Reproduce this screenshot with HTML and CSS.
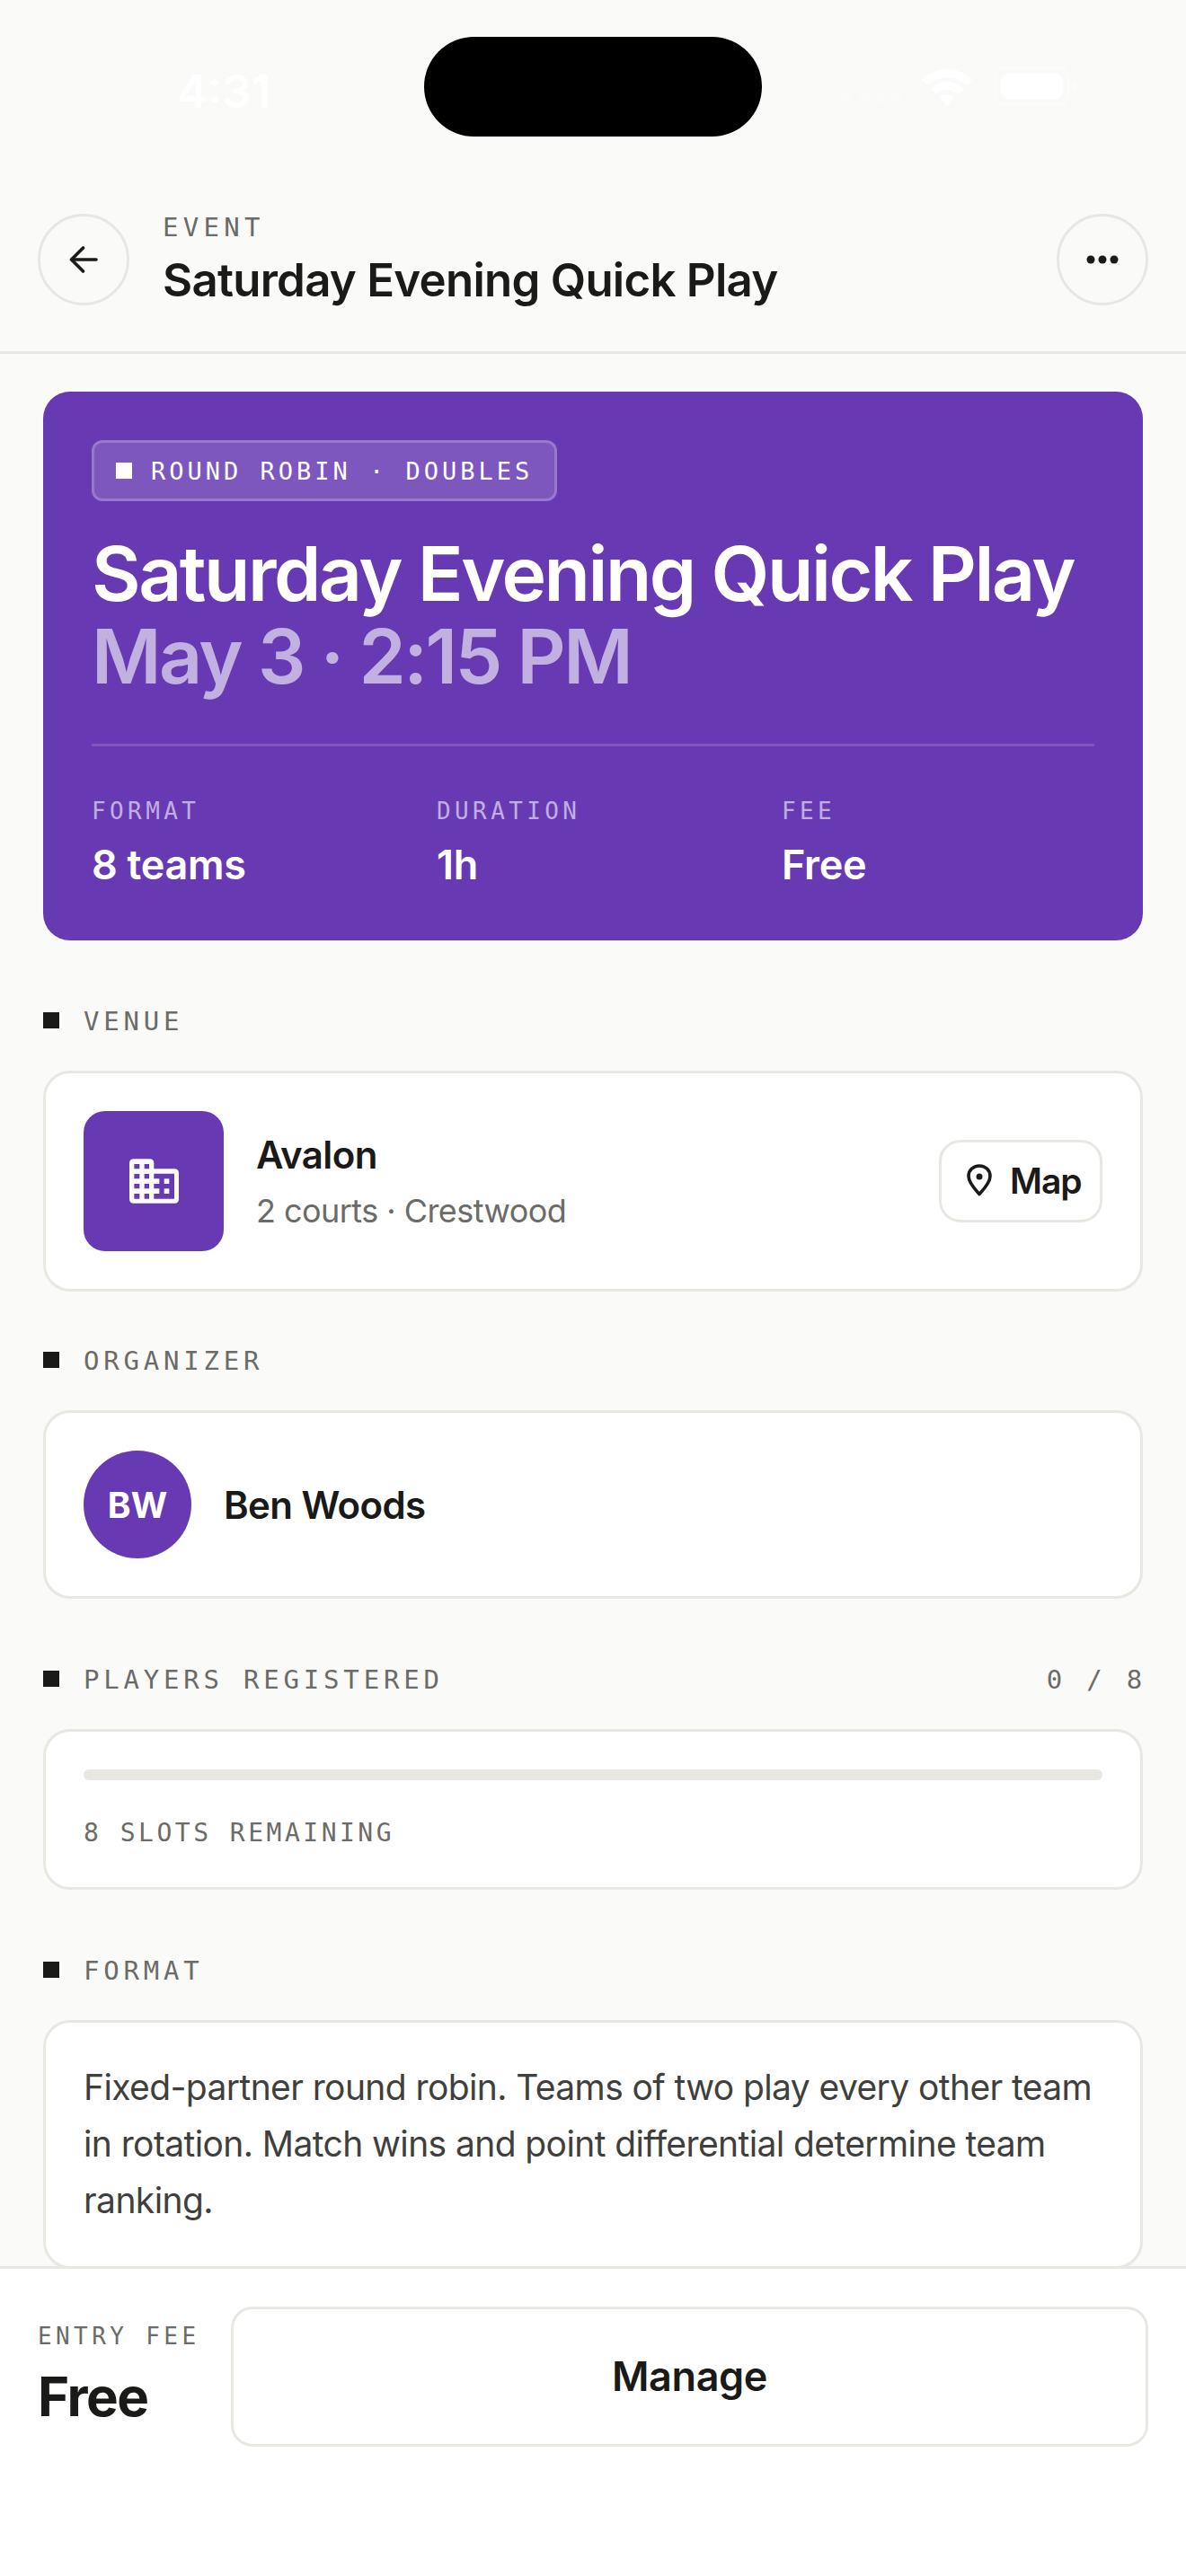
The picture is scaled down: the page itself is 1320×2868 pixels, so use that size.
FILE: index.html
```html
<!DOCTYPE html>
<html lang="en">

<head>
    <meta charset="UTF-8">
    <meta name="viewport" content="width=device-width, initial-scale=1.0">
    <title>Saturday Evening Quick Play</title>
    <link rel="stylesheet" href="styles.css">
</head>

<body>
    <div class="app">

        <div class="statusBar">
            <div class="time">4:31</div>
            <div class="island"></div>
            <div class="statusIcons">
                <svg class="signal" width="68" height="12" viewBox="0 0 68 12">
                    <circle cx="6" cy="6" r="5.5"></circle>
                    <circle cx="24" cy="6" r="5.5"></circle>
                    <circle cx="42" cy="6" r="5.5"></circle>
                    <circle cx="62" cy="6" r="5.5"></circle>
                </svg>
                <svg class="wifi" width="58" height="42" viewBox="0 0 58 42">
                    <path d="M1 13 C16 -3 42 -3 57 13 L51 19 C38 7 20 7 7 19 Z"></path>
                    <path d="M11 23 C21 12 37 12 47 23 L41 29 C33 22 25 22 17 29 Z"></path>
                    <path d="M21 33 C26 28 32 28 37 33 L29 42 Z"></path>
                </svg>
                <div class="battery">
                    <div class="batteryFill"></div>
                </div>
                <div class="batteryNub"></div>
            </div>
        </div>

        <header class="topBar">
            <button class="roundBtn" aria-label="Back">
                <svg width="32" height="32" viewBox="0 0 32 32" fill="none" stroke="#1a1a18" stroke-width="3.6" stroke-linecap="round" stroke-linejoin="round">
                    <path d="M30 16 H3"></path>
                    <path d="M15.500 3 L2.500 16 L15.500 29"></path>
                </svg>
            </button>
            <div class="topText">
                <div class="eyebrow">EVENT</div>
                <div class="topTitle">Saturday Evening Quick Play</div>
            </div>
            <button class="roundBtn" aria-label="More">
                <svg width="36" height="10" viewBox="0 0 36 10" fill="#1a1a18">
                    <circle cx="5" cy="5" r="4.500"></circle>
                    <circle cx="18" cy="5" r="4.500"></circle>
                    <circle cx="31" cy="5" r="4.500"></circle>
                </svg>
            </button>
        </header>

        <main class="content">
            <section class="hero">
                <div class="badge"><span class="badgeDot"></span>ROUND ROBIN · DOUBLES</div>
                <h1 class="heroTitle">Saturday Evening Quick Play</h1>
                <div class="heroDate">May 3 · 2:15 PM</div>
                <div class="heroMeta">
                    <div>
                        <div class="metaLabel">FORMAT</div>
                        <div class="metaValue">8 teams</div>
                    </div>
                    <div>
                        <div class="metaLabel">DURATION</div>
                        <div class="metaValue">1h</div>
                    </div>
                    <div>
                        <div class="metaLabel">FEE</div>
                        <div class="metaValue">Free</div>
                    </div>
                </div>
            </section>

            <section class="block">
                <div class="blockHead"><span class="blockMark"></span>VENUE</div>
                <div class="card row">
                    <div class="venueIcon">
                        <svg width="55" height="50" viewBox="190 207 165 148">
                            <path fill="#fafaf8" fill-rule="evenodd" d="M205 207 H257 Q272 207 272 222 V240 H340 Q355 240 355 255 V340 Q355 355 340 355 H205 Q190 355 190 340 V222 Q190 207 205 207 Z M206 224 V240 H224 V224 Z M240 224 V240 H256 V224 Z M206 257 V273 H224 V257 Z M240 257 V273 H256 V257 Z M206 290 V306 H224 V290 Z M240 290 V306 H256 V290 Z M206 323 V340 H224 V323 Z M240 323 V340 H256 V323 Z M272 256 V273 H290 V290 H272 V306 H290 V323 H272 V340 H340 V256 Z"></path>
                            <rect x="306" y="273" width="17" height="17" fill="#fafaf8"></rect>
                            <rect x="306" y="306" width="17" height="17" fill="#fafaf8"></rect>
                        </svg>
                    </div>
                    <div class="venueText">
                        <div class="venueName">Avalon</div>
                        <div class="venueSub">2 courts · Crestwood</div>
                    </div>
                    <button class="mapBtn">
                        <svg width="28" height="36" viewBox="0 0 28 36" fill="none" stroke="#1a1a18" stroke-width="3.600" stroke-linejoin="round">
                            <path d="M14 2 C7 2 2 7 2 13.500 C2 21 10 29 14 33.500 C18 29 26 21 26 13.500 C26 7 21 2 14 2 Z"></path>
                            <circle cx="14" cy="14" r="3.500" fill="#1a1a18" stroke="none"></circle>
                        </svg>
                        Map
                    </button>
                </div>
            </section>

            <section class="block blockTight">
                <div class="blockHead"><span class="blockMark"></span>ORGANIZER</div>
                <div class="card row">
                    <div class="avatar">BW</div>
                    <div class="organizerName">Ben Woods</div>
                </div>
            </section>

            <section class="block">
                <div class="blockHead">
                    <span class="blockMark"></span>PLAYERS REGISTERED
                    <span class="blockCount">0 / 8</span>
                </div>
                <div class="card">
                    <div class="track"></div>
                    <div class="slots">8 SLOTS REMAINING</div>
                </div>
            </section>

            <section class="block">
                <div class="blockHead"><span class="blockMark"></span>FORMAT</div>
                <div class="card">
                    <p class="formatText">Fixed-partner round robin. Teams of two play every other team in rotation. Match wins and point differential determine team ranking.</p>
                </div>
            </section>
        </main>

        <footer class="bottomBar">
            <div class="feeBox">
                <div class="feeLabel">ENTRY FEE</div>
                <div class="feeValue">Free</div>
            </div>
            <button class="manageBtn">Manage</button>
        </footer>

    </div>
</body>

</html>
```

FILE: styles.css
```css
* {
    box-sizing: border-box;
}

html,
body {
    margin: 0;
    padding: 0;
}

body {
    background-color: #fafaf8;
    color: #1a1a18;
    font-family: Inter, "Noto Sans", sans-serif;
}

button {
    font-family: inherit;
    cursor: pointer;
}

.app {
    width: 1320px;
    height: 2868px;
    display: flex;
    flex-direction: column;
    overflow: hidden;
}

/* status bar */
.statusBar {
    height: 212px;
    flex: none;
    padding-top: 41px;
    display: grid;
    grid-template-columns: 1fr 376px 1fr;
    align-items: start;
}

.time {
    padding: 30px 0 0 197px;
    font-size: 51px;
    line-height: 62px;
    font-weight: 600;
    color: #ffffff;
}

.island {
    height: 111px;
    background-color: #000;
    border-radius: 56px;
}

.statusIcons {
    display: flex;
    align-items: flex-end;
    padding: 33px 0 0 89px;
    height: 77px;
}

.signal {
    fill: #fbfbfa;
    margin-bottom: 1px;
}

.wifi {
    fill: #ffffff;
    margin-left: 20px;
}

.battery {
    width: 85px;
    height: 44px;
    margin-left: 23px;
    padding: 5px;
    border: 3px solid #fcfcfb;
    border-radius: 14px;
}

.batteryFill {
    width: 100%;
    height: 100%;
    background-color: #ffffff;
    border-radius: 9px;
}

.batteryNub {
    width: 5px;
    height: 14px;
    margin: 0 0 15px 3px;
    background-color: #fcfcfb;
    border-radius: 0 5px 5px 0;
}

/* top bar */
.topBar {
    flex: none;
    height: 182px;
    padding: 26px 42px 0;
    display: flex;
    align-items: flex-start;
    gap: 37px;
    border-bottom: 3px solid #e8e7e2;
}

.roundBtn {
    width: 102px;
    height: 102px;
    flex: none;
    padding: 0;
    display: flex;
    align-items: center;
    justify-content: center;
    background: transparent;
    border: 3px solid #e8e7e2;
    border-radius: 50%;
}

.topText {
    flex: 1;
}

.eyebrow {
    font-family: "DejaVu Sans Mono", monospace;
    font-size: 29px;
    line-height: 30px;
    letter-spacing: 5.300px;
    color: #6b6b68;
}

.topTitle {
    margin-top: 11px;
    font-size: 51px;
    line-height: 66px;
    font-weight: 600;
    letter-spacing: -0.75px;
}

/* scrolling part */
.content {
    flex: 1;
    min-height: 0;
    overflow: hidden;
    padding: 42px 48px 0;
}

.hero {
    height: 611px;
    padding: 54px 54px 0;
    background-color: #673ab3;
    border-radius: 30px;
    color: #fff;
}

.badge {
    display: inline-flex;
    align-items: center;
    height: 68px;
    padding: 0 24px;
    background-color: rgba(255, 255, 255, 0.15);
    border: 3px solid rgba(255, 255, 255, 0.2);
    border-radius: 12px;
    font-family: "DejaVu Sans Mono", monospace;
    font-size: 27px;
    letter-spacing: 4px;
}

.badgeDot {
    width: 18px;
    height: 18px;
    margin-right: 21px;
    background-color: #fff;
}

.heroTitle {
    margin: 35px 0 0;
    font-size: 84px;
    line-height: 92px;
    font-weight: 600;
    letter-spacing: -2.5px;
}

.heroDate {
    font-size: 84px;
    line-height: 92px;
    font-weight: 600;
    letter-spacing: -2.5px;
    color: rgba(255, 255, 255, 0.6);
}

.heroMeta {
    margin-top: 51px;
    padding-top: 57px;
    display: grid;
    grid-template-columns: repeat(3, 384px);
    border-top: 3px solid rgba(255, 255, 255, 0.15);
}

.metaLabel {
    font-family: "DejaVu Sans Mono", monospace;
    font-size: 26px;
    line-height: 30px;
    letter-spacing: 4.400px;
    color: rgba(255, 255, 255, 0.6);
}

.metaValue {
    margin-top: 18px;
    font-size: 45px;
    line-height: 54px;
    font-weight: 600;
    letter-spacing: -0.3px;
}

/* sections */
.block {
    margin-top: 75px;
}

.blockTight {
    margin-top: 62px;
}

.blockHead {
    height: 30px;
    margin-bottom: 40px;
    display: flex;
    align-items: center;
    font-family: "DejaVu Sans Mono", monospace;
    font-size: 29px;
    letter-spacing: 4.800px;
    color: #6b6b68;
}

.blockMark {
    width: 18px;
    height: 18px;
    margin-right: 27px;
    margin-bottom: 2px;
    background-color: #1a1a18;
}

.blockCount {
    margin-left: auto;
    margin-right: -4px;
}

.card {
    padding: 42px;
    background-color: #fff;
    border: 3px solid #e8e7e2;
    border-radius: 30px;
}

.row {
    display: flex;
    align-items: center;
}

.venueIcon {
    width: 156px;
    height: 156px;
    flex: none;
    display: flex;
    align-items: center;
    justify-content: center;
    background-color: #673ab3;
    border-radius: 24px;
}

.venueText {
    flex: 1;
    margin-left: 36px;
}

.venueName {
    font-size: 42px;
    line-height: 54px;
    font-weight: 600;
    letter-spacing: -0.6px;
}

.venueSub {
    margin-top: 11px;
    font-size: 36px;
    line-height: 48px;
    letter-spacing: -0.55px;
    color: #6b6b68;
}

.mapBtn {
    width: 182px;
    height: 92px;
    padding: 0 0 2px 28px;
    display: flex;
    align-items: center;
    gap: 20px;
    background-color: #fff;
    border: 3px solid #e8e7e2;
    border-radius: 24px;
    font-size: 39px;
    font-weight: 600;
    letter-spacing: -1px;
    color: #1a1a18;
}

.avatar {
    width: 120px;
    height: 120px;
    flex: none;
    display: flex;
    align-items: center;
    justify-content: center;
    background-color: #673ab3;
    border-radius: 50%;
    color: #fff;
    font-size: 39px;
    font-weight: 700;
}

.organizerName {
    margin-left: 36px;
    font-size: 42px;
    font-weight: 600;
    letter-spacing: -0.6px;
}

.track {
    height: 12px;
    background-color: #e8e7e2;
    border-radius: 6px;
}

.slots {
    margin-top: 41px;
    font-family: "DejaVu Sans Mono", monospace;
    font-size: 28px;
    line-height: 36px;
    letter-spacing: 3.500px;
    color: #6b6b68;
}

.formatText {
    margin: -2px 0 0;
    font-size: 39px;
    line-height: 63px;
    letter-spacing: -0.6px;
    color: #3f3f3d;
}

/* footer */
.bottomBar {
    flex: none;
    height: 345px;
    padding: 42px 42px 0;
    display: flex;
    align-items: flex-start;
    gap: 36px;
    background-color: #fff;
    border-top: 3px solid #e8e7e2;
}

.feeBox {
    flex: none;
    width: 179px;
    padding-top: 18px;
    white-space: nowrap;
}

.feeLabel {
    font-family: "DejaVu Sans Mono", monospace;
    font-size: 26px;
    line-height: 30px;
    letter-spacing: 4.400px;
    color: #6b6b68;
}

.feeValue {
    margin-top: 19px;
    font-size: 60px;
    line-height: 66px;
    font-weight: 700;
    letter-spacing: -1.500px;
}

.manageBtn {
    flex: 1;
    height: 156px;
    padding: 0 0 2px;
    background-color: #fff;
    border: 3px solid #e8e7e2;
    border-radius: 24px;
    font-size: 45px;
    font-weight: 600;
    letter-spacing: -0.4px;
    color: #1a1a18;
}
```
